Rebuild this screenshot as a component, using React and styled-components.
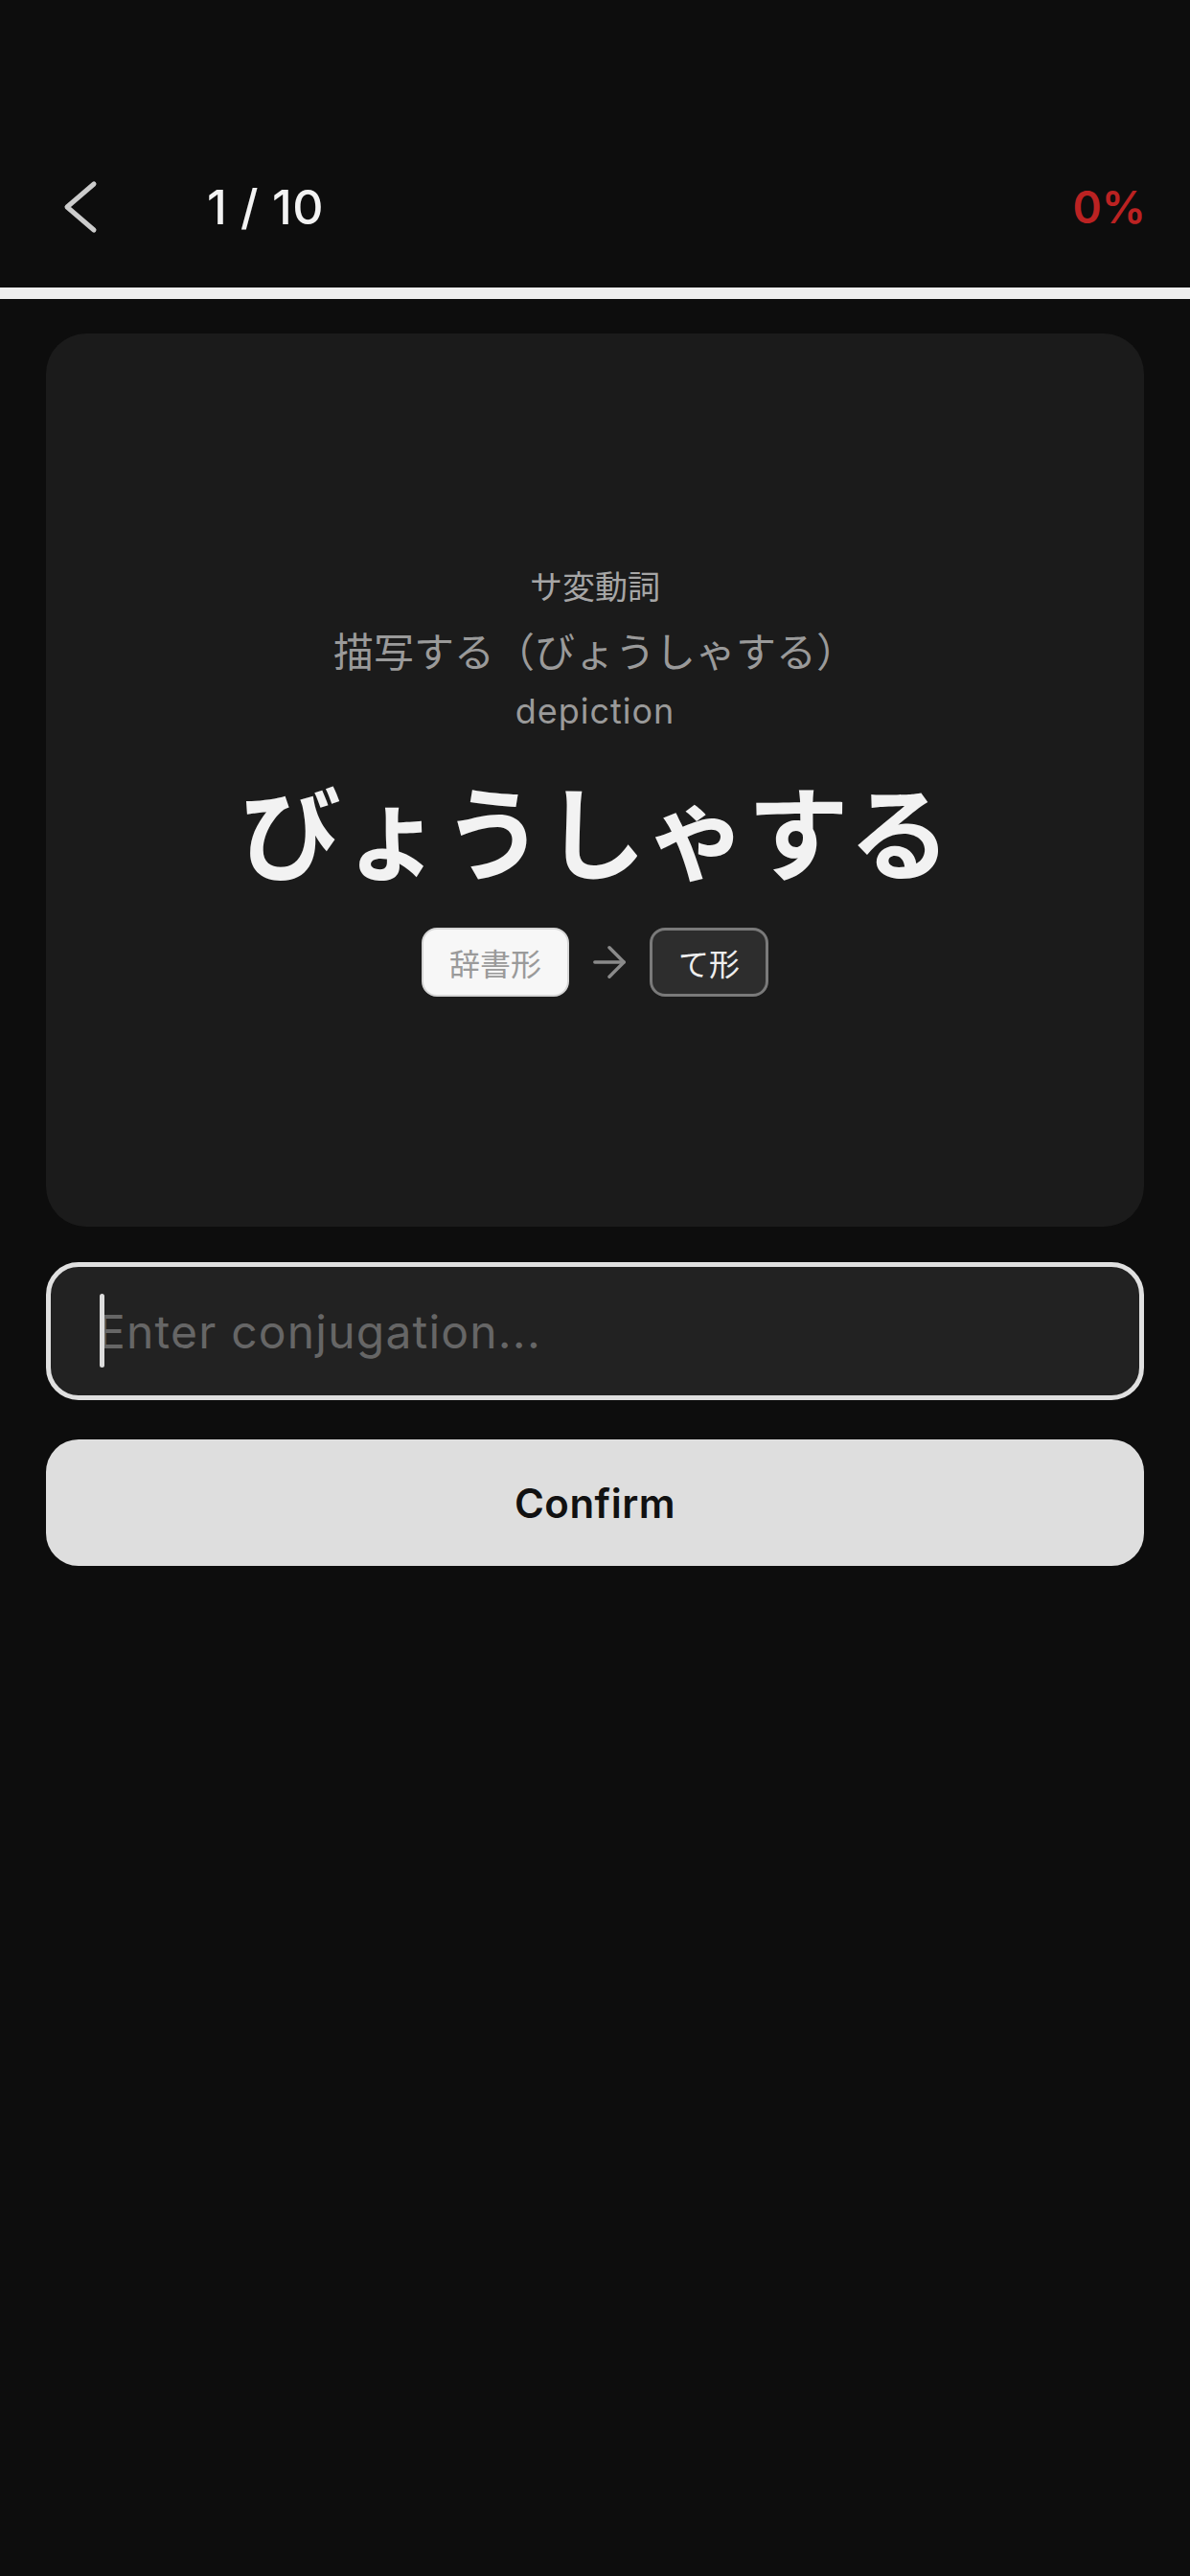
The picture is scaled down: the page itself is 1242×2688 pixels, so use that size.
import React from "react"
import styled, { createGlobalStyle } from "styled-components"
import { ArrowRight } from "lucide-react"

const GlobalStyle = createGlobalStyle`
*{
  margin: 0;
  padding: 0;
  box-sizing: border-box;
}
body{
  background-color: #0d0d0d;
  font-family: Inter, "Noto Sans CJK JP", sans-serif;
}
`

const Page = styled.div`
min-height: 2688px;
background-color: #0d0d0d;
`

const Header = styled.header`
height: 300px;
padding: 132px 46px 0 66px;
`

const HeaderRow = styled.div`
height: 168px;
display: flex;
align-items: center;
`

const BackButton = styled.button`
display: flex;
background: none;
border: none;
cursor: pointer;
`

const Counter = styled.div`
margin-left: 114px;
font-size: 50px;
font-weight: 500;
color: #f2f2f2;
letter-spacing: 0.5px;
`

const Percent = styled.div`
margin-left: auto;
font-size: 46px;
font-weight: 600;
color: #bb2222;
`

const ProgressTrack = styled.div`
height: 12px;
background-color: #eeeeee;
`

const Main = styled.main`
padding: 36px 48px 0;
`

const Card = styled.section`
height: 932px;
border-radius: 42px;
background-color: #1b1b1b;
display: flex;
flex-direction: column;
align-items: center;
justify-content: center;
`

const Category = styled.div`
font-family: "Noto Sans CJK JP", sans-serif;
font-size: 34px;
line-height: 44px;
color: #a6a6a6;
`

const Reading = styled.div`
margin-top: 19px;
font-family: "Noto Sans CJK JP", sans-serif;
font-size: 42px;
line-height: 52px;
color: #9a9a9a;
`

const Meaning = styled.div`
margin-top: 16px;
font-size: 36px;
line-height: 44px;
letter-spacing: 1px;
color: #9a9a9a;
`

const Word = styled.h1`
margin-top: 30px;
font-family: "Noto Sans CJK JP", sans-serif;
font-size: 106px;
line-height: 140px;
font-weight: 700;
color: #f2f2f2;
`

const FormRow = styled.div`
margin-top: 34px;
display: flex;
align-items: center;
gap: 16px;
`

const Chip = styled.span`
height: 72px;
padding: 0 27px;
display: flex;
align-items: center;
border-radius: 16px;
font-family: "Noto Sans CJK JP", sans-serif;
font-size: 32px;
background-color: ${p => p.$target ? "#2d2d2d" : "#f7f7f7"};
border: ${p => p.$target ? "3px solid #7a7a7a" : "2px solid #d6d6d6"};
color: ${p => p.$target ? "#eeeeee" : "#9a9a9a"};
`

const InputBox = styled.label`
position: relative;
margin-top: 37px;
height: 144px;
display: flex;
align-items: center;
border: 5px solid #e0e0e0;
border-radius: 34px;
background-color: #222222;
`

const AnswerInput = styled.input`
width: 100%;
height: 100%;
padding-left: 49px;
background: transparent;
border: none;
outline: none;
font-family: Inter, "Noto Sans CJK JP", sans-serif;
font-size: 48px;
letter-spacing: 1.2px;
color: #f2f2f2;
caret-color: transparent;
&::placeholder{
  color: #666666;
}
`

const Caret = styled.span`
position: absolute;
left: 51px;
top: 28px;
width: 5px;
height: 77px;
border-radius: 3px;
background-color: #dddddd;
`

const ConfirmButton = styled.button`
margin-top: 41px;
width: 100%;
height: 132px;
border: none;
border-radius: 34px;
background-color: #dedede;
font-family: Inter, sans-serif;
font-size: 42px;
font-weight: 600;
letter-spacing: 0.5px;
color: #111111;
cursor: pointer;
`

export default function App() {
  return (
    <Page>
      <GlobalStyle/>
      <Header>
        <HeaderRow>
          <BackButton aria-label="back">
            <svg width="36" height="56" viewBox="0 0 36 56" fill="none">
              <path d="M32 4 L4 28 L32 52" stroke="#cccccc" strokeWidth="5" strokeLinecap="round" strokeLinejoin="round"/>
            </svg>
          </BackButton>
          <Counter>1 / 10</Counter>
          <Percent>0%</Percent>
        </HeaderRow>
      </Header>
      <ProgressTrack/>
      <Main>
        <Card>
          <Category>サ変動詞</Category>
          <Reading>描写する（びょうしゃする）</Reading>
          <Meaning>depiction</Meaning>
          <Word>びょうしゃする</Word>
          <FormRow>
            <Chip>辞書形</Chip>
            <ArrowRight size={52} color="#8a8a8a" strokeWidth={1.6}/>
            <Chip $target>て形</Chip>
          </FormRow>
        </Card>
        <InputBox>
          <Caret/>
          <AnswerInput placeholder="Enter conjugation..."/>
        </InputBox>
        <ConfirmButton>Confirm</ConfirmButton>
      </Main>
    </Page>
  )
}
